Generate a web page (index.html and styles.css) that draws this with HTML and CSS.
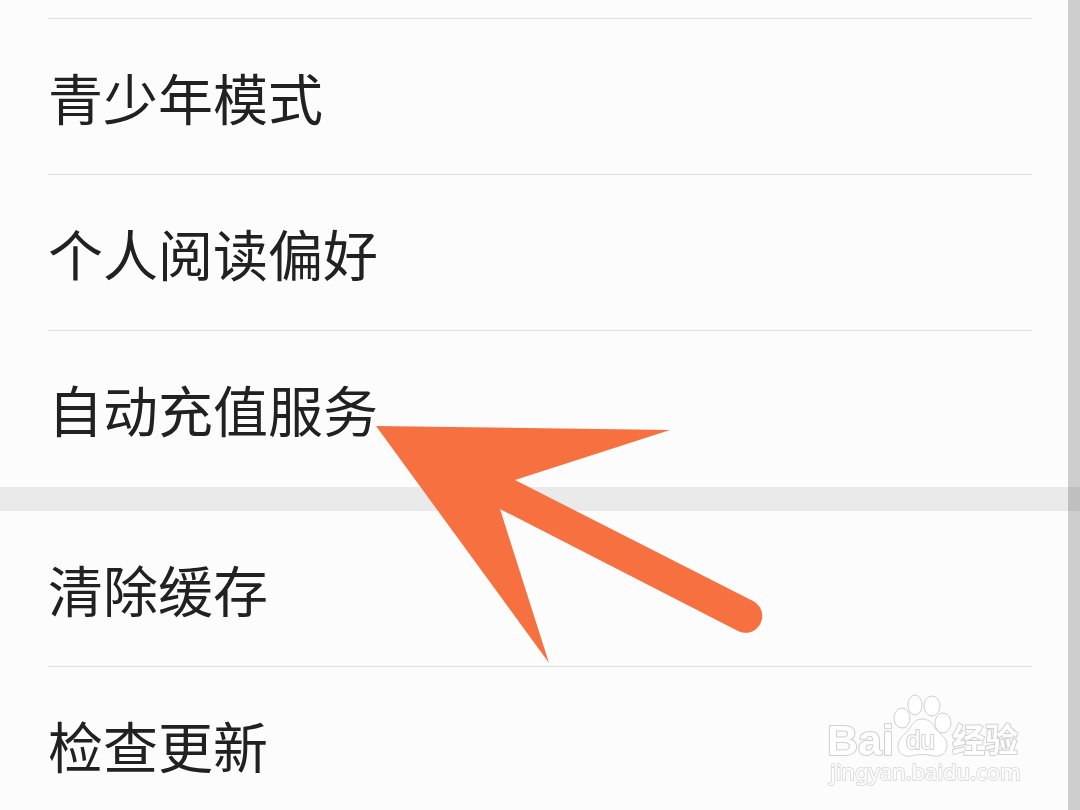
FILE: index.html
```
<!DOCTYPE html>
<html lang="zh-CN">
<head>
    <meta charset="UTF-8">
    <meta name="viewport" content="width=device-width, initial-scale=1.0">
    <title>设置</title>
    <link rel="stylesheet" href="styles.css">
</head>
<body>
    <main class="settings">
        <ul class="group">
            <li><a href="#teen">青少年模式</a></li>
            <li><a href="#reading">个人阅读偏好</a></li>
            <li><a href="#recharge">自动充值服务</a></li>
        </ul>
        <ul class="group">
            <li><a href="#cache">清除缓存</a></li>
            <li><a href="#update">检查更新</a></li>
        </ul>
    </main>

    <div class="scrollbar"></div>

    <svg class="arrow" viewBox="0 0 390 240" aria-hidden="true">
        <path d="M0 0 L294 4 L139 54 L377 175 A16 16 0 0 1 362 205 L124 83 L173 237 Z"/>
    </svg>

    <svg class="watermark" viewBox="0 0 210 105">
        <text class="bai" x="7" y="65">Bai</text>
        <ellipse cx="82" cy="28" rx="8" ry="10"/>
        <ellipse cx="95" cy="15" rx="7" ry="10"/>
        <ellipse cx="112" cy="16" rx="8" ry="10"/>
        <ellipse cx="123" cy="33" rx="8" ry="10"/>
        <path d="M102 29 C109 29 112 33 115 38 C119 44 127 47 127 55 C127 63 121 67 114 66 C106 64 98 64 91 66 C83 67 78 63 78 56 C78 48 86 44 90 38 C93 33 96 29 102 29 Z"/>
        <text class="du" x="86" y="59">du</text>
        <text class="jingyan" x="132" y="62">经验</text>
        <text class="url" x="10" y="90">jingyan.baidu.com</text>
    </svg>
</body>
</html>
```
FILE: styles.css
```
* {
    box-sizing: border-box;
}
body {
    margin: 0;
    height: 100vh;
    overflow: hidden;
    background-color: #fcfcfc;
    color: #212121;
    font-family: "Noto Sans CJK SC", sans-serif;
}
.settings {
    padding-top: 18px;
}
.group {
    list-style: none;
    margin: 0;
    padding: 0 48px 1px;
}
.group + .group {
    border-top: 24px solid #eaeaea;
}
.group li {
    border-top: 1px solid #e0e0e0;
}
.group + .group li:first-child {
    border-top: none;
}
.group a {
    display: block;
    padding: 37px 0 38px;
    font-size: 55px;
    line-height: 80px;
    color: inherit;
    text-decoration: none;
}
.scrollbar {
    position: fixed;
    top: 0;
    right: 0;
    bottom: 0;
    width: 12px;
    background-color: rgba(0, 0, 0, 0.18);
}
.arrow {
    position: absolute;
    left: 376px;
    top: 426px;
    width: 390px;
    height: 240px;
    fill: #f67040;
}
/* logo in the bottom corner */
.watermark {
    position: fixed;
    right: 50px;
    bottom: 15px;
    width: 210px;
    height: 105px;
    fill: #fff;
    stroke: #cfcfcf;
    stroke-width: 1px;
}
.watermark text {
    font-family: "Liberation Sans", sans-serif;
    stroke-width: 2px;
    stroke-linejoin: round;
    paint-order: stroke;
}
.watermark .bai {
    font-size: 43px;
    font-weight: bold;
}
.watermark .du {
    font-size: 26px;
}
.watermark .jingyan {
    font-family: "Noto Sans CJK SC", sans-serif;
    font-size: 33px;
    font-weight: bold;
}
.watermark .url {
    font-family: "Noto Sans", sans-serif;
    font-size: 22px;
    stroke: #dcdcdc;
}
```
